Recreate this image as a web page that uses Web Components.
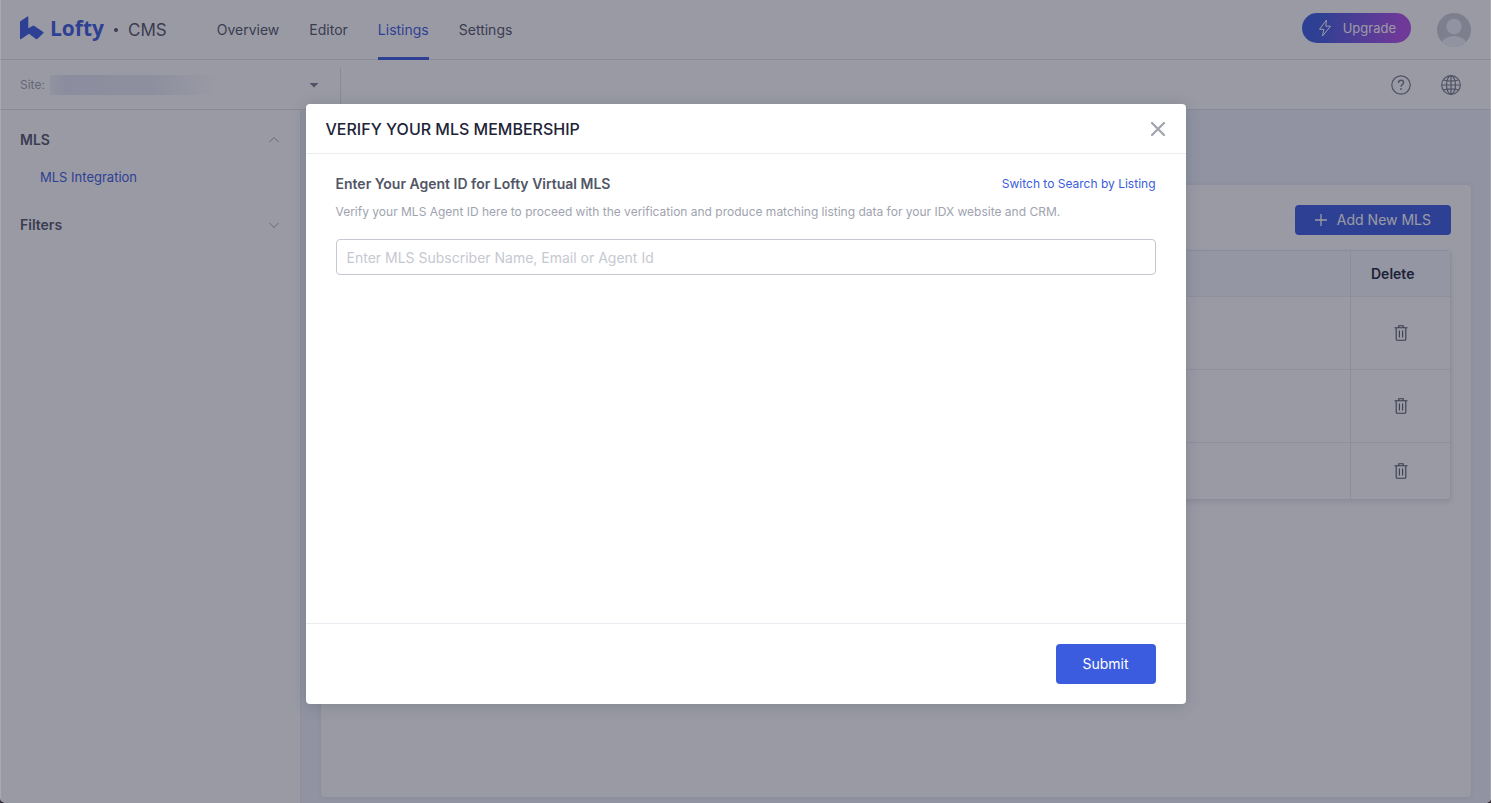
<!DOCTYPE html>
<html lang="en">
<head>
<meta charset="utf-8">
<meta name="viewport" content="width=device-width, initial-scale=1">
<title>Lofty CMS</title>
<style>
  body {
    margin: 0;
    background: #1d1012;
    color: #515666;
    font-family: Inter, 'Liberation Sans', sans-serif;
    font-size: 14px;
    line-height: 20px;
  }
</style>
</head>
<body>
<cms-app>
  <cms-header slot="header">
    <nav-link href="#overview">Overview</nav-link>
    <nav-link href="#editor">Editor</nav-link>
    <nav-link href="#listings" active>Listings</nav-link>
    <nav-link href="#settings">Settings</nav-link>
  </cms-header>
  <site-bar slot="toolbar"></site-bar>
  <side-menu slot="sidebar">
    <menu-group label="MLS" open><a href="#mls-integration">MLS Integration</a></menu-group>
    <menu-group label="Filters"></menu-group>
  </side-menu>
  <mls-panel></mls-panel>
</cms-app>
<modal-dialog heading="VERIFY YOUR MLS MEMBERSHIP">
  <verify-form></verify-form>
  <action-button slot="footer" size="large">Submit</action-button>
</modal-dialog>

<script>
// Shared helper: clone a template into an open shadow root
function render(host, html) {
  const template = document.createElement('template');
  template.innerHTML = html;
  host.attachShadow({mode: 'open'});
  host.shadowRoot.appendChild(template.content.cloneNode(true));
}

// Page shell
class CmsApp extends HTMLElement{
    constructor(){
        super();
        render(this, `
<style>
  :host {
    display: flex;
    flex-direction: column;
    min-height: 100vh;
    background: #FFF;
    border-radius: 0 0 5px 5px;
    overflow: hidden;
  }
  .content {
    display: flex;
    flex: 1;
  }
  main {
    display: flex;
    flex: 1;
    background: #EFF2F9;
  }
</style>
<slot name="header"></slot>
<slot name="toolbar"></slot>
<div class="content">
  <slot name="sidebar"></slot>
  <main><slot></slot></main>
</div>`);
    }
}

// Header Components
class CmsHeader extends HTMLElement{
    constructor(){
        super();
        render(this, `
<style>
  :host {
    display: block;
    border-bottom: 1px solid #E1E2E6;
  }
  header {
    display: flex;
    align-items: center;
    height: 59px;
    padding: 0 20px;
  }
  .logo {
    display: flex;
    align-items: center;
    color: #3B5CDE;
    font: 700 21px/28px 'Open Sans', sans-serif;
    gap: 6px;
    text-decoration: none;
    padding-bottom: 4px;
  }
  .dot {
    width: 4px;
    height: 4px;
    margin: 0 10px;
    border-radius: 50%;
    background: #515666;
  }
  .product {
    font-size: 17px;
  }
  nav {
    display: flex;
    align-self: stretch;
    gap: 30px;
    margin-left: 50px;
    flex: 1;
  }
  .upgrade {
    display: flex;
    align-items: center;
    gap: 10px;
    height: 30px;
    margin: 0 26px 4px 0;
    padding: 0 15px;
    border: 0;
    border-radius: 15px;
    background: linear-gradient(100deg, #3B5CDE 15%, #B14FE8 90%);
    color: #FFF;
    font: inherit;
    font-size: 13px;
  }
  .avatar {
    display: flex;
    padding: 0;
    border: 0;
    background: none;
  }
</style>
<header>
  <a class="logo" href="#home">
    <svg width="24" height="24" viewBox="0 0 24 24" fill="currentColor" aria-hidden="true"><path d="M0 5.500 7.400.5Q8.300 0 8.300 1v11.300L13 9.800q.7-.4 1.400.1l8.900 6.100q.7.6 0 1.200l-5.800 5.600q-.8.700-1.600.1L9 17.800 1.200 23Q0 23.700 0 22.500Z"/></svg>
    <span>Lofty</span>
  </a>
  <span class="dot"></span>
  <span class="product">CMS</span>
  <nav aria-label="Main"><slot></slot></nav>
  <button class="upgrade" type="button">
    <svg width="16" height="18" viewBox="0 0 16 18" fill="none" stroke="currentColor" stroke-linejoin="round" aria-hidden="true"><path d="M9.500 1 2.500 10.300h4.300L5.500 17l8-9.800H8.800Z"/></svg>
    <span>Upgrade</span>
  </button>
  <button class="avatar" type="button" aria-label="Account">
    <svg width="34" height="34" viewBox="0 0 34 34"><clipPath id="c"><circle cx="17" cy="17" r="17"/></clipPath><g clip-path="url(#c)"><path fill="#CACDD6" d="M0 0h34v34H0z"/><circle cx="17" cy="13.500" r="7.700" fill="#F0F2F7"/><ellipse cx="17" cy="32" rx="13" ry="9" fill="#F0F2F7"/></g></svg>
  </button>
</header>`);
    }
}

class NavLink extends HTMLElement{
    constructor(){
        super();
        render(this, `
<style>
  :host {
    display: flex;
  }
  a {
    display: flex;
    align-items: center;
    border-bottom: 3px solid transparent;
    border-top: 3px solid transparent;
    margin-bottom: -1px;
    color: #515666;
    text-decoration: none;
  }
  :host([active]) a {
    color: #3B5CDE;
    border-bottom-color: #3B5CDE;
  }
</style>
<a><slot></slot></a>`);
        this.shadowRoot.querySelector('a').href = this.getAttribute("href");
    }
}

// Site selector and the help / language buttons
class SiteBar extends HTMLElement{
    constructor(){
        super();
        render(this, `
<style>
  :host {
    display: flex;
    height: 49px;
    border-bottom: 1px solid #E1E2E6;
  }
  .site {
    display: flex;
    align-items: center;
    align-self: flex-end;
    box-sizing: border-box;
    width: 341px;
    height: 41px;
    padding: 0 20px 8px;
    border-right: 1px solid #E1E2E6;
    gap: 5px;
    color: #A0A3AF;
    font-size: 12px;
  }
  .picker {
    display: flex;
    align-items: center;
    flex: 1;
  }
  select {
    appearance: none;
    flex: 1;
    height: 20px;
    border: 0;
    background: linear-gradient(90deg, #F2F3F8, #E4E7F2 15px, #E9EBF3 100px, #FFF 168px);
  }
  .tools {
    display: flex;
    flex: 1;
    align-items: center;
    justify-content: flex-end;
    gap: 30px;
    padding-right: 30px;
  }
  .tools button {
    display: flex;
    padding: 0;
    border: 0;
    background: none;
    color: #797E8B;
  }
</style>
<div class="site">
  <label for="site">Site:</label>
  <div class="picker">
    <select id="site"><option></option></select>
    <svg width="12" height="6" viewBox="0 0 12 6" aria-hidden="true"><path d="M1.500 1h9L6 5.500Z" fill="#797E8B"/></svg>
  </div>
</div>
<div class="tools">
  <button type="button" aria-label="Help">
    <svg width="20" height="20" viewBox="0 0 20 20" fill="none" stroke="currentColor" stroke-width="1.200"><circle cx="10" cy="10" r="9.200"/><path stroke-width="1.400" d="M7.500 8q0-2.700 2.600-2.700 2.500 0 2.500 2.300 0 1.200-1.400 2-1.200.8-1.200 2.200"/><circle cx="10" cy="14" r=".9" fill="currentColor" stroke="none"/></svg>
  </button>
  <button type="button" aria-label="Language">
    <svg width="20" height="20" viewBox="0 0 20 20" fill="none" stroke="currentColor" stroke-width="1.200"><circle cx="10" cy="10" r="9.300"/><ellipse cx="10" cy="10" rx="4.500" ry="9.300"/><path d="M10 .7v18.600M.7 10h18.600M2.300 5q7.700 2.200 15.400 0M2.300 15q7.700-2.200 15.400 0"/></svg>
  </button>
</div>`);
    }
}

// Sidebar Components
class SideMenu extends HTMLElement{
    constructor(){
        super();
        render(this, `
<style>
  :host {
    display: block;
    box-sizing: border-box;
    width: 301px;
    padding: 20px 20px;
    border-right: 1px solid #E9EAEF;
  }
  nav {
    display: flex;
    flex-direction: column;
    gap: 18px;
  }
</style>
<nav aria-label="Listings"><slot></slot></nav>`);
    }
}

class MenuGroup extends HTMLElement{
    constructor(){
        super();
        render(this, `
<style>
  :host {
    display: block;
  }
  button {
    display: flex;
    align-items: center;
    justify-content: space-between;
    width: 100%;
    padding: 0;
    border: 0;
    background: none;
    color: #515666;
    font: inherit;
    font-weight: 600;
    text-align: left;
  }
  svg {
    fill: none;
    stroke: #A0A3AF;
  }
  :host([open]) svg {
    transform: rotate(180deg);
  }
  .items {
    display: none;
    padding: 17px 20px 10px;
  }
  :host([open]) .items {
    display: block;
  }
  ::slotted(a) {
    color: #3B5CDE;
    font-size: 13px;
    text-decoration: none;
  }
</style>
<button type="button">
  <span></span>
  <svg width="12" height="8" viewBox="0 0 12 8" aria-hidden="true"><path d="M1.500 2 6 6.500 10.500 2"/></svg>
</button>
<div class="items"><slot></slot></div>`);
        this.shadowRoot.querySelector('span').textContent = this.getAttribute("label");
        this.shadowRoot.querySelector('button').addEventListener('click', () => this.toggleAttribute('open'));
    }
}

// Blue button, used in the panel and in the dialog
class ActionButton extends HTMLElement{
    constructor(){
        super();
        render(this, `
<style>
  :host {
    display: flex;
  }
  button {
    display: flex;
    align-items: center;
    justify-content: center;
    gap: 10px;
    height: 30px;
    padding: 0 20px;
    border: 0;
    border-radius: 4px;
    background: #3B5CDE;
    color: #FFF;
    font: inherit;
    cursor: pointer;
  }
  :host([size="large"]) button {
    min-width: 100px;
    height: 40px;
  }
</style>
<button type="button"><slot name="icon"></slot><slot></slot></button>`);
    }
}

class MlsPanel extends HTMLElement{
    constructor(){
        super();
        render(this, `
<style>
  :host {
    display: flex;
    flex: 1;
    flex-direction: column;
    box-sizing: border-box;
    padding: 75px 20px 6px;
  }
  section {
    flex: 1;
    padding: 20px;
    border-radius: 4px;
    background: #FFF;
    box-shadow: 0 0 5px rgba(32, 36, 55, .08);
  }
  .actions {
    display: flex;
    justify-content: flex-end;
    margin-bottom: 15px;
  }
  table {
    width: 100%;
    border: 1px solid #E6E8EE;
    border-collapse: separate;
    border-spacing: 0;
    border-radius: 4px;
    box-shadow: 0 2px 5px rgba(32, 36, 55, .12);
  }
  th, td {
    box-sizing: border-box;
    height: 73px;
    padding: 0;
    border-bottom: 1px solid #EBECF1;
    text-align: center;
  }
  th {
    height: 46px;
    padding-left: 20px;
    background: #F6F7FB;
    color: #202437;
    font-weight: 600;
    text-align: left;
  }
  th:last-child, td:last-child {
    width: 100px;
    border-left: 1px solid #E6E8EE;
  }
  tbody tr:last-child td {
    height: 56px;
    border-bottom: 0;
  }
  td button {
    display: flex;
    margin: 0 auto;
    padding: 0;
    border: 0;
    background: none;
    color: #515666;
  }
</style>
<section>
  <div class="actions">
    <action-button>
      <svg slot="icon" width="12" height="12" viewBox="0 0 12 12" stroke="#FFF" stroke-width="1.300" aria-hidden="true"><path d="M6 0v12M0 6h12"/></svg>
      Add New MLS
    </action-button>
  </div>
  <table>
    <thead><tr><th></th><th scope="col">Delete</th></tr></thead>
    <tbody></tbody>
  </table>
</section>`);
        const body = this.shadowRoot.querySelector('tbody');
        for (let i = 0; i < 3; i++) {
            body.insertRow().innerHTML = `<td></td><td><button type="button" aria-label="Delete"><svg width="14" height="16" viewBox="0 0 14 16" fill="none" stroke="currentColor" stroke-width="1.100"><path d="M.5 2.800h13M4.800 2.500V.8h4.400v1.700M2.200 3v11.200q0 1 1 1h7.600q1 0 1-1V3M5.400 5.500v7M8.600 5.500v7"/></svg></button></td>`;
        }
    }
}

// Dialog Components
class ModalDialog extends HTMLElement{
    constructor(){
        super();
        render(this, `
<style>
  :host {
    display: flex;
    justify-content: center;
    align-items: flex-start;
    position: absolute;
    inset: 0;
    box-sizing: border-box;
    padding-top: 104px;
    background: rgba(32, 32, 55, .45);
    border: 1px solid rgba(255, 255, 255, .15);
    border-width: 0 1px;
  }
  section {
    display: flex;
    flex-direction: column;
    width: 880px;
    min-height: 600px;
    border-radius: 4px;
    background: #FFF;
    box-shadow: 0 2px 15px rgba(32, 55, 55, .2);
  }
  header {
    display: flex;
    align-items: center;
    justify-content: space-between;
    height: 49px;
    padding: 0 20px;
    border-bottom: 1px solid #EBECF1;
  }
  h1 {
    margin: 0;
    color: #202437;
    font-size: 16px;
    font-weight: 500;
  }
  header button {
    display: flex;
    padding: 0;
    border: 0;
    background: none;
  }
  .body {
    flex: 1;
    padding: 20px 30px;
  }
  footer {
    display: flex;
    justify-content: flex-end;
    padding: 20px 30px;
    border-top: 1px solid #EBECF1;
  }
</style>
<section role="dialog" aria-modal="true" aria-labelledby="heading">
  <header>
    <h1 id="heading"></h1>
    <button type="button" aria-label="Close">
      <svg width="16" height="16" viewBox="0 0 16 16" stroke="#A0A3AF" stroke-width="2.200" stroke-linecap="round"><path d="m2 2 12 12M14 2 2 14"/></svg>
    </button>
  </header>
  <div class="body"><slot></slot></div>
  <footer><slot name="footer"></slot></footer>
</section>`);
        this.shadowRoot.querySelector('h1').textContent = this.getAttribute("heading");
    }
}

class VerifyForm extends HTMLElement{
    constructor(){
        super();
        render(this, `
<style>
  :host {
    display: block;
  }
  .title {
    display: flex;
    align-items: center;
    justify-content: space-between;
  }
  label {
    font-weight: 600;
  }
  a {
    color: #3B5CDE;
    font-size: 12px;
    text-decoration: none;
  }
  p {
    margin: 8px 0 17px;
    color: #A0A3AF;
    font-size: 12px;
  }
  input {
    box-sizing: border-box;
    width: 100%;
    height: 36px;
    padding: 0 10px;
    border: 1px solid #C6C8D1;
    border-radius: 4px;
    color: #515666;
    font: inherit;
    outline: none;
  }
  input:focus {
    border-color: #3B5CDE;
  }
  input::placeholder {
    color: #C6C8D1;
  }
</style>
<form>
  <div class="title">
    <label for="agent">Enter Your Agent ID for Lofty Virtual MLS</label>
    <a href="#search-by-listing">Switch to Search by Listing</a>
  </div>
  <p>Verify your MLS Agent ID here to proceed with the verification and produce matching listing data for your IDX website and CRM.</p>
  <input id="agent" type="text" placeholder="Enter MLS Subscriber Name, Email or Agent Id">
</form>`);
    }
}

customElements.define("cms-app", CmsApp);
customElements.define("cms-header", CmsHeader);
customElements.define("nav-link", NavLink);
customElements.define("site-bar", SiteBar);
customElements.define("side-menu", SideMenu);
customElements.define("menu-group", MenuGroup);
customElements.define("action-button", ActionButton);
customElements.define("mls-panel", MlsPanel);
customElements.define("modal-dialog", ModalDialog);
customElements.define("verify-form", VerifyForm);
</script>
</body>
</html>
